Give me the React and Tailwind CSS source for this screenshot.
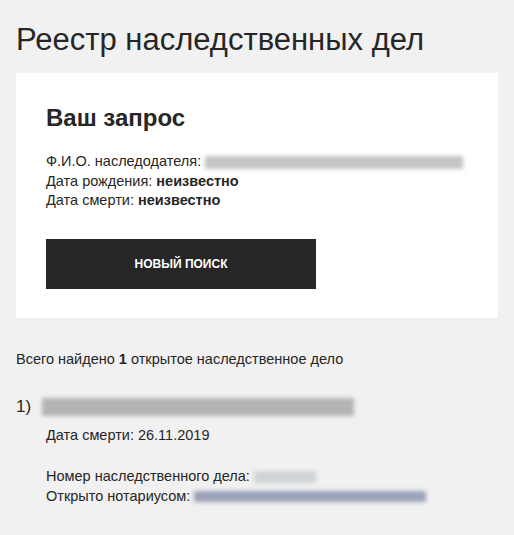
import React from 'react';

function Blur({ className }) {
  return <span className={`inline-block align-middle blur-[2px] ${className}`} />;
}

export default function App() {
  return (
    <div className="min-h-[535px] bg-[#f1f1f1] px-4 pt-[22px] pb-8 text-[#262626] font-['Liberation_Sans',Arial,sans-serif]">
      <h1 className="text-[31px] leading-[36px] font-normal">Реестр наследственных дел</h1>

      <div className="mt-[15px] bg-white px-[30px] pt-[30px] pb-[29px]">
        <h2 className="text-[24px] leading-[30px] font-bold">Ваш запрос</h2>
        <div className="mt-[19px] text-[14.5px] leading-[19.5px]">
          <div>
            Ф.И.О. наследодателя: <Blur className="w-[258px] h-[13px] bg-[#c4c4c4]" />
          </div>
          <div>
            Дата рождения: <b>неизвестно</b>
          </div>
          <div>
            Дата смерти: <b>неизвестно</b>
          </div>
        </div>
        <button className="mt-[28px] w-[270px] h-[50px] bg-[#262626] text-white text-[12px] font-bold uppercase">
          Новый поиск
        </button>
      </div>

      <p className="mt-[31px] text-[14.5px] leading-[20px]">
        Всего найдено <b>1</b> открытое наследственное дело
      </p>

      <div className="mt-[26px] flex items-center gap-[11px]">
        <span className="text-[17px] leading-[24px]">1)</span>
        <Blur className="w-[312px] h-[18px] bg-[#b3b3b3]" />
      </div>
      <div className="pl-[30px] text-[14.5px] leading-[19.5px]">
        <div className="mt-[7px]">Дата смерти: 26.11.2019</div>
        <div className="mt-[22px]">
          Номер наследственного дела: <Blur className="w-[62px] h-[12px] bg-[#cfd4d8]" />
        </div>
        <div>
          Открыто нотариусом: <Blur className="w-[232px] h-[11px] bg-[#9aa1b8]" />
        </div>
      </div>
    </div>
  );
}
